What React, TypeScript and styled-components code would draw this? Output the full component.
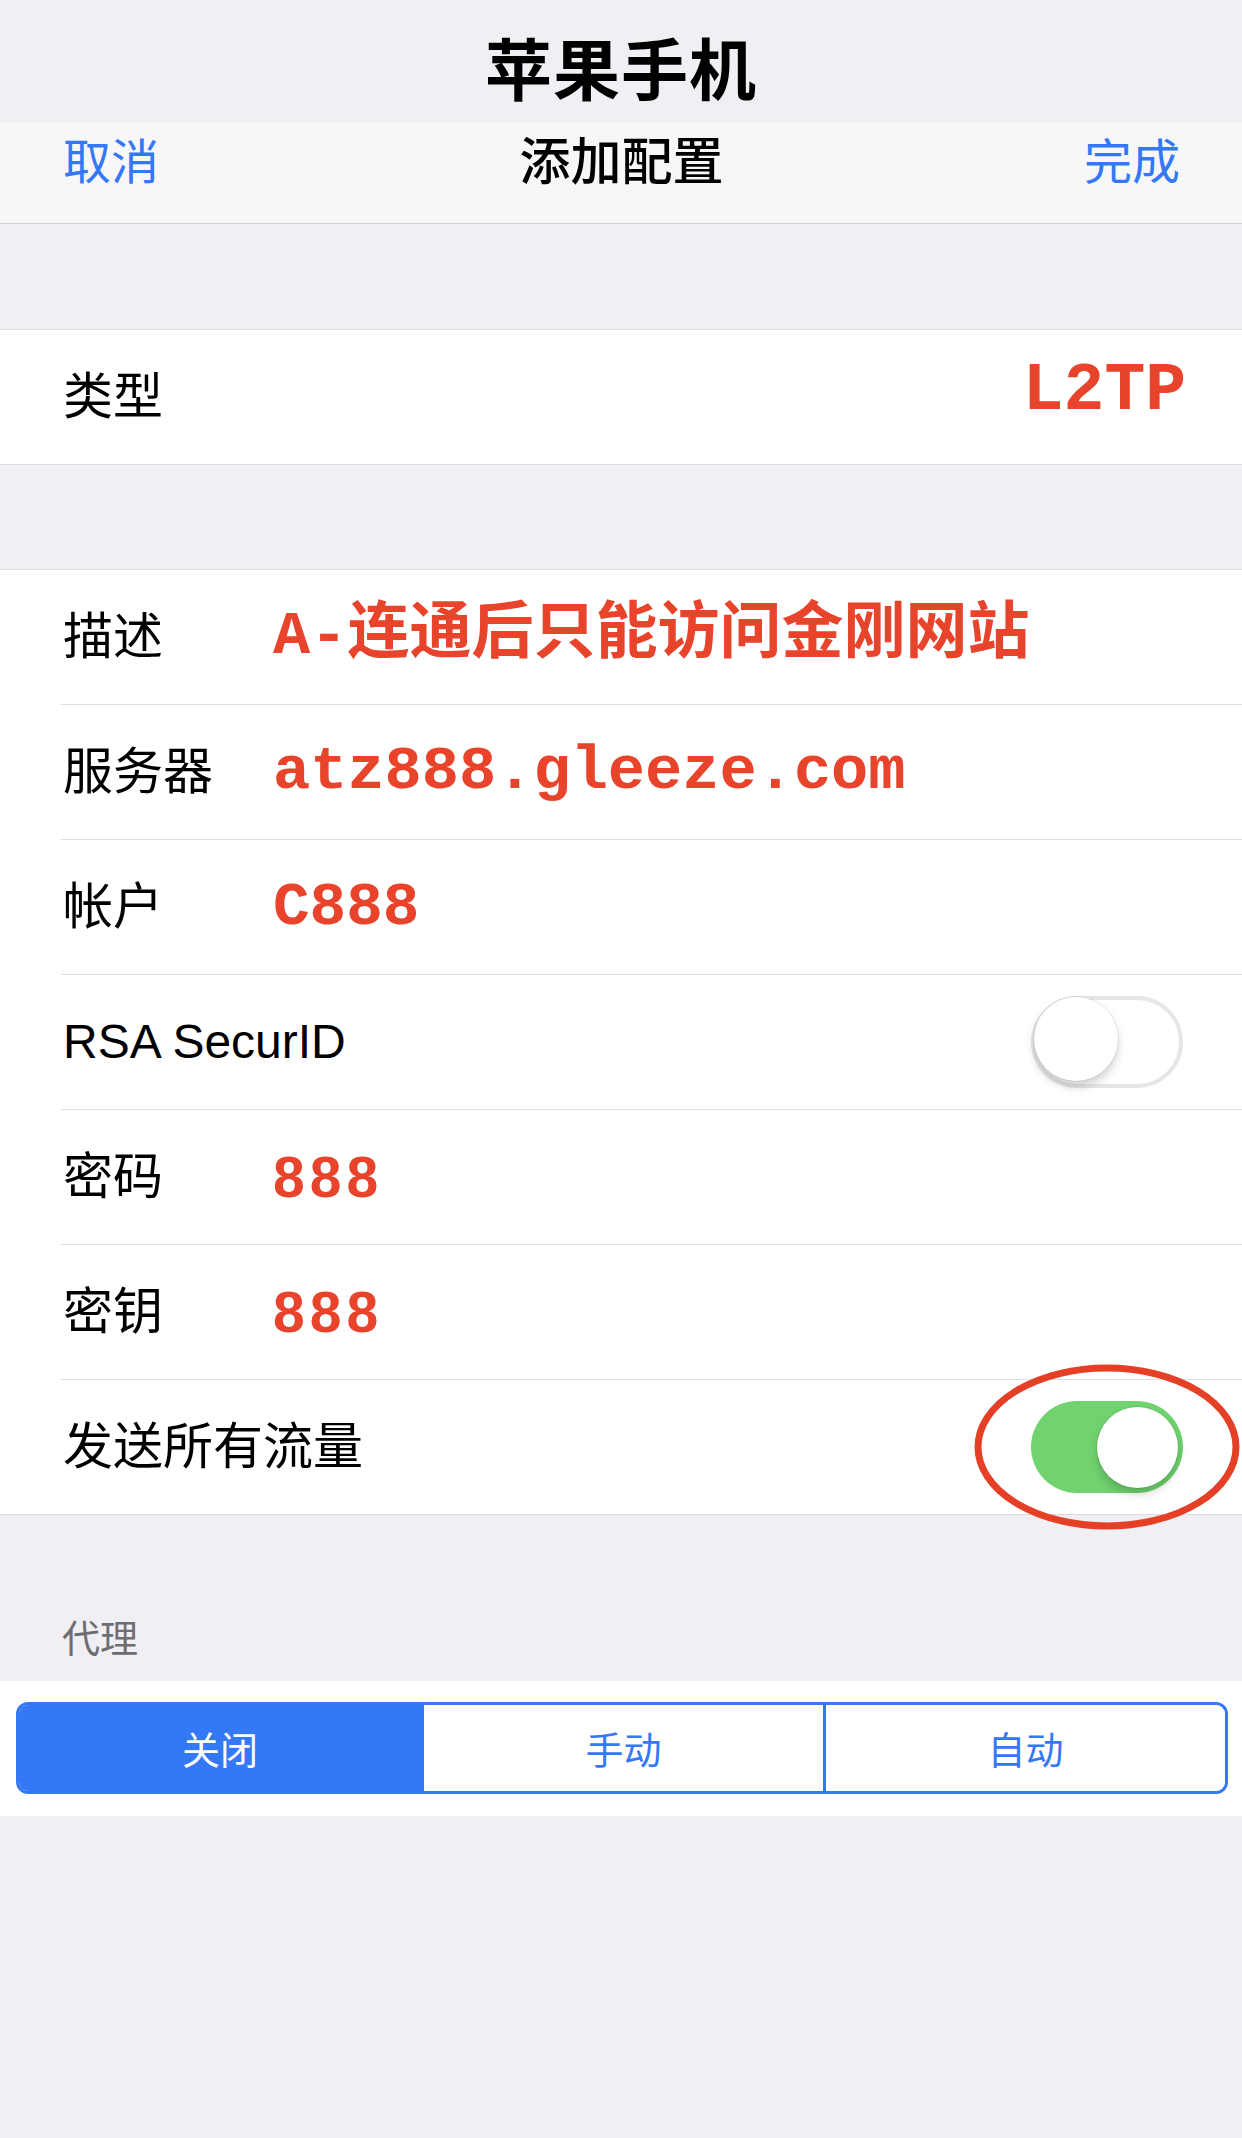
import React from "react";
import styled, { createGlobalStyle } from "styled-components";

const GlobalStyle = createGlobalStyle`
  html, body {
    margin: 0;
    padding: 0;
    background: #efeff4;
  }
  body {
    font-family: "Liberation Sans", "Noto Sans CJK SC", sans-serif;
    -webkit-font-smoothing: antialiased;
  }
  * { box-sizing: border-box; }
`;

const Page = styled.div`
  width: 1242px;
  min-height: 2138px;
  background: #efeff4;
  display: flex;
  flex-direction: column;
`;

const TitleBand = styled.div`
  height: 123px;
  padding-top: 8px;
  display: flex;
  align-items: center;
  justify-content: center;
  font-family: "Noto Sans CJK SC", sans-serif;
  font-weight: 700;
  font-size: 67px;
  line-height: 67px;
  color: #000;
  letter-spacing: 1px;
`;

const NavBar = styled.div`
  height: 101px;
  background: #f7f7f8;
  border-bottom: 1px solid #cfcfd3;
  display: grid;
  grid-template-columns: 1fr auto 1fr;
  align-items: center;
  padding: 0 62px 30px 63px;
`;

const NavButton = styled.span<{ $align: "left" | "right" }>`
  justify-self: ${(p) => (p.$align === "left" ? "start" : "end")};
  font-family: "Noto Sans CJK SC", sans-serif;
  font-size: 48px;
  line-height: 48px;
  color: #3478f6;
`;

const NavTitle = styled.span`
  font-family: "Noto Sans CJK SC", sans-serif;
  font-size: 51px;
  line-height: 51px;
  font-weight: 500;
  color: #000;
`;

const Gap = styled.div<{ $h: number }>`
  height: ${(p) => p.$h}px;
`;

const Group = styled.div`
  background: #fff;
  border-top: 1px solid #dcdce0;
  border-bottom: 1px solid #dcdce0;
  display: flex;
  flex-direction: column;
`;

const Row = styled.div`
  height: 134px;
  display: flex;
  align-items: center;
  padding: 0 59px 0 63px;
`;

const Separator = styled.div`
  height: 1px;
  margin-left: 61px;
  background: #e0e0e4;
`;

const Label = styled.span<{ $wide?: boolean; $latin?: boolean }>`
  width: ${(p) => (p.$wide ? "auto" : "210px")};
  flex: none;
  font-family: "Liberation Sans", "Noto Sans CJK SC", sans-serif;
  font-size: ${(p) => (p.$latin ? 48 : 50)}px;
  line-height: 50px;
  color: #000;
  white-space: nowrap;
`;

const Value = styled.span<{ $kind: "mono" | "sans"; $size: number; $right?: boolean }>`
  font-family: ${(p) =>
    p.$kind === "mono"
      ? `"Liberation Mono", "Noto Sans CJK SC", monospace`
      : `"Liberation Sans", "Noto Sans CJK SC", sans-serif`};
  font-weight: 700;
  font-size: ${(p) => p.$size}px;
  line-height: ${(p) => p.$size}px;
  letter-spacing: ${(p) => (p.$kind === "sans" ? "5px" : "0")};
  color: #e8432b;
  white-space: nowrap;
  margin-left: ${(p) => (p.$right ? "auto" : "0")};
  margin-right: ${(p) => (p.$right ? "-3px" : "0")};
  margin-top: ${(p) => (p.$right ? "-12px" : "0")};
`;

const SwitchWrap = styled.div`
  position: relative;
  margin-left: auto;
  display: flex;
`;

const Track = styled.div<{ $on: boolean }>`
  width: 152px;
  height: 92px;
  border-radius: 46px;
  padding: 5px;
  display: flex;
  justify-content: ${(p) => (p.$on ? "flex-end" : "flex-start")};
  align-items: center;
  background: ${(p) => (p.$on ? "#70d36f" : "#fff")};
  border: ${(p) => (p.$on ? "none" : "4px solid #e6e6e9")};
`;

const Knob = styled.div<{ $on: boolean }>`
  width: ${(p) => (p.$on ? 81 : 84)}px;
  height: ${(p) => (p.$on ? 81 : 84)}px;
  margin: ${(p) => (p.$on ? "0" : "-6px 0 0 -6px")};
  border-radius: 50%;
  background: #fff;
  box-shadow: 0 6px 10px rgba(0, 0, 0, 0.18), 0 0 0 1px rgba(0, 0, 0, 0.06);
`;

const Annotation = styled.svg`
  position: absolute;
  left: 50%;
  top: 50%;
  width: 272px;
  height: 172px;
  transform: translate(-50%, -50%);
  overflow: visible;
  pointer-events: none;
`;

const SectionHeader = styled.div`
  height: 166px;
  display: flex;
  align-items: flex-end;
  padding: 0 0 26px 62px;
  font-family: "Noto Sans CJK SC", sans-serif;
  font-size: 38px;
  line-height: 38px;
  color: #6d6d72;
`;

const SegmentPanel = styled.div`
  background: #fff;
  padding: 21px 14px 22px 16px;
`;

const Segmented = styled.div`
  height: 92px;
  display: grid;
  grid-template-columns: repeat(3, 1fr);
  border: 3px solid #3478f6;
  border-radius: 12px;
  overflow: hidden;
`;

const Segment = styled.div<{ $active?: boolean }>`
  display: flex;
  align-items: center;
  justify-content: center;
  background: ${(p) => (p.$active ? "#3478f6" : "#fff")};
  color: ${(p) => (p.$active ? "#fff" : "#3478f6")};
  font-family: "Noto Sans CJK SC", sans-serif;
  font-size: 38px;
  line-height: 38px;
  & + & {
    border-left: 3px solid #3478f6;
  }
`;

function Switch({ on, circled }: { on: boolean; circled?: boolean }) {
  return (
    <SwitchWrap>
      <Track $on={on}>
        <Knob $on={on} />
      </Track>
      {circled && (
        <Annotation viewBox="0 0 272 172">
          <ellipse cx="136" cy="86" rx="129" ry="79" fill="none" stroke="#e53f26" strokeWidth="7" />
        </Annotation>
      )}
    </SwitchWrap>
  );
}

export default function App() {
  return (
    <Page>
      <GlobalStyle />
      <TitleBand>苹果手机</TitleBand>
      <NavBar>
        <NavButton $align="left">取消</NavButton>
        <NavTitle>添加配置</NavTitle>
        <NavButton $align="right">完成</NavButton>
      </NavBar>
      <Gap $h={105} />
      <Group>
        <Row>
          <Label>类型</Label>
          <Value $kind="mono" $size={68} $right>
            L2TP
          </Value>
        </Row>
      </Group>
      <Gap $h={104} />
      <Group>
        <Row>
          <Label>描述</Label>
          <Value $kind="mono" $size={62}>
            A-连通后只能访问金刚网站
          </Value>
        </Row>
        <Separator />
        <Row>
          <Label>服务器</Label>
          <Value $kind="mono" $size={62}>
            atz888.gleeze.com
          </Value>
        </Row>
        <Separator />
        <Row>
          <Label>帐户</Label>
          <Value $kind="mono" $size={61}>
            C888
          </Value>
        </Row>
        <Separator />
        <Row>
          <Label $wide $latin>
            RSA SecurID
          </Label>
          <Switch on={false} />
        </Row>
        <Separator />
        <Row>
          <Label>密码</Label>
          <Value $kind="sans" $size={57}>
            888
          </Value>
        </Row>
        <Separator />
        <Row>
          <Label>密钥</Label>
          <Value $kind="sans" $size={57}>
            888
          </Value>
        </Row>
        <Separator />
        <Row>
          <Label $wide>发送所有流量</Label>
          <Switch on circled />
        </Row>
      </Group>
      <SectionHeader>代理</SectionHeader>
      <SegmentPanel>
        <Segmented>
          <Segment $active>关闭</Segment>
          <Segment>手动</Segment>
          <Segment>自动</Segment>
        </Segmented>
      </SegmentPanel>
    </Page>
  );
}
